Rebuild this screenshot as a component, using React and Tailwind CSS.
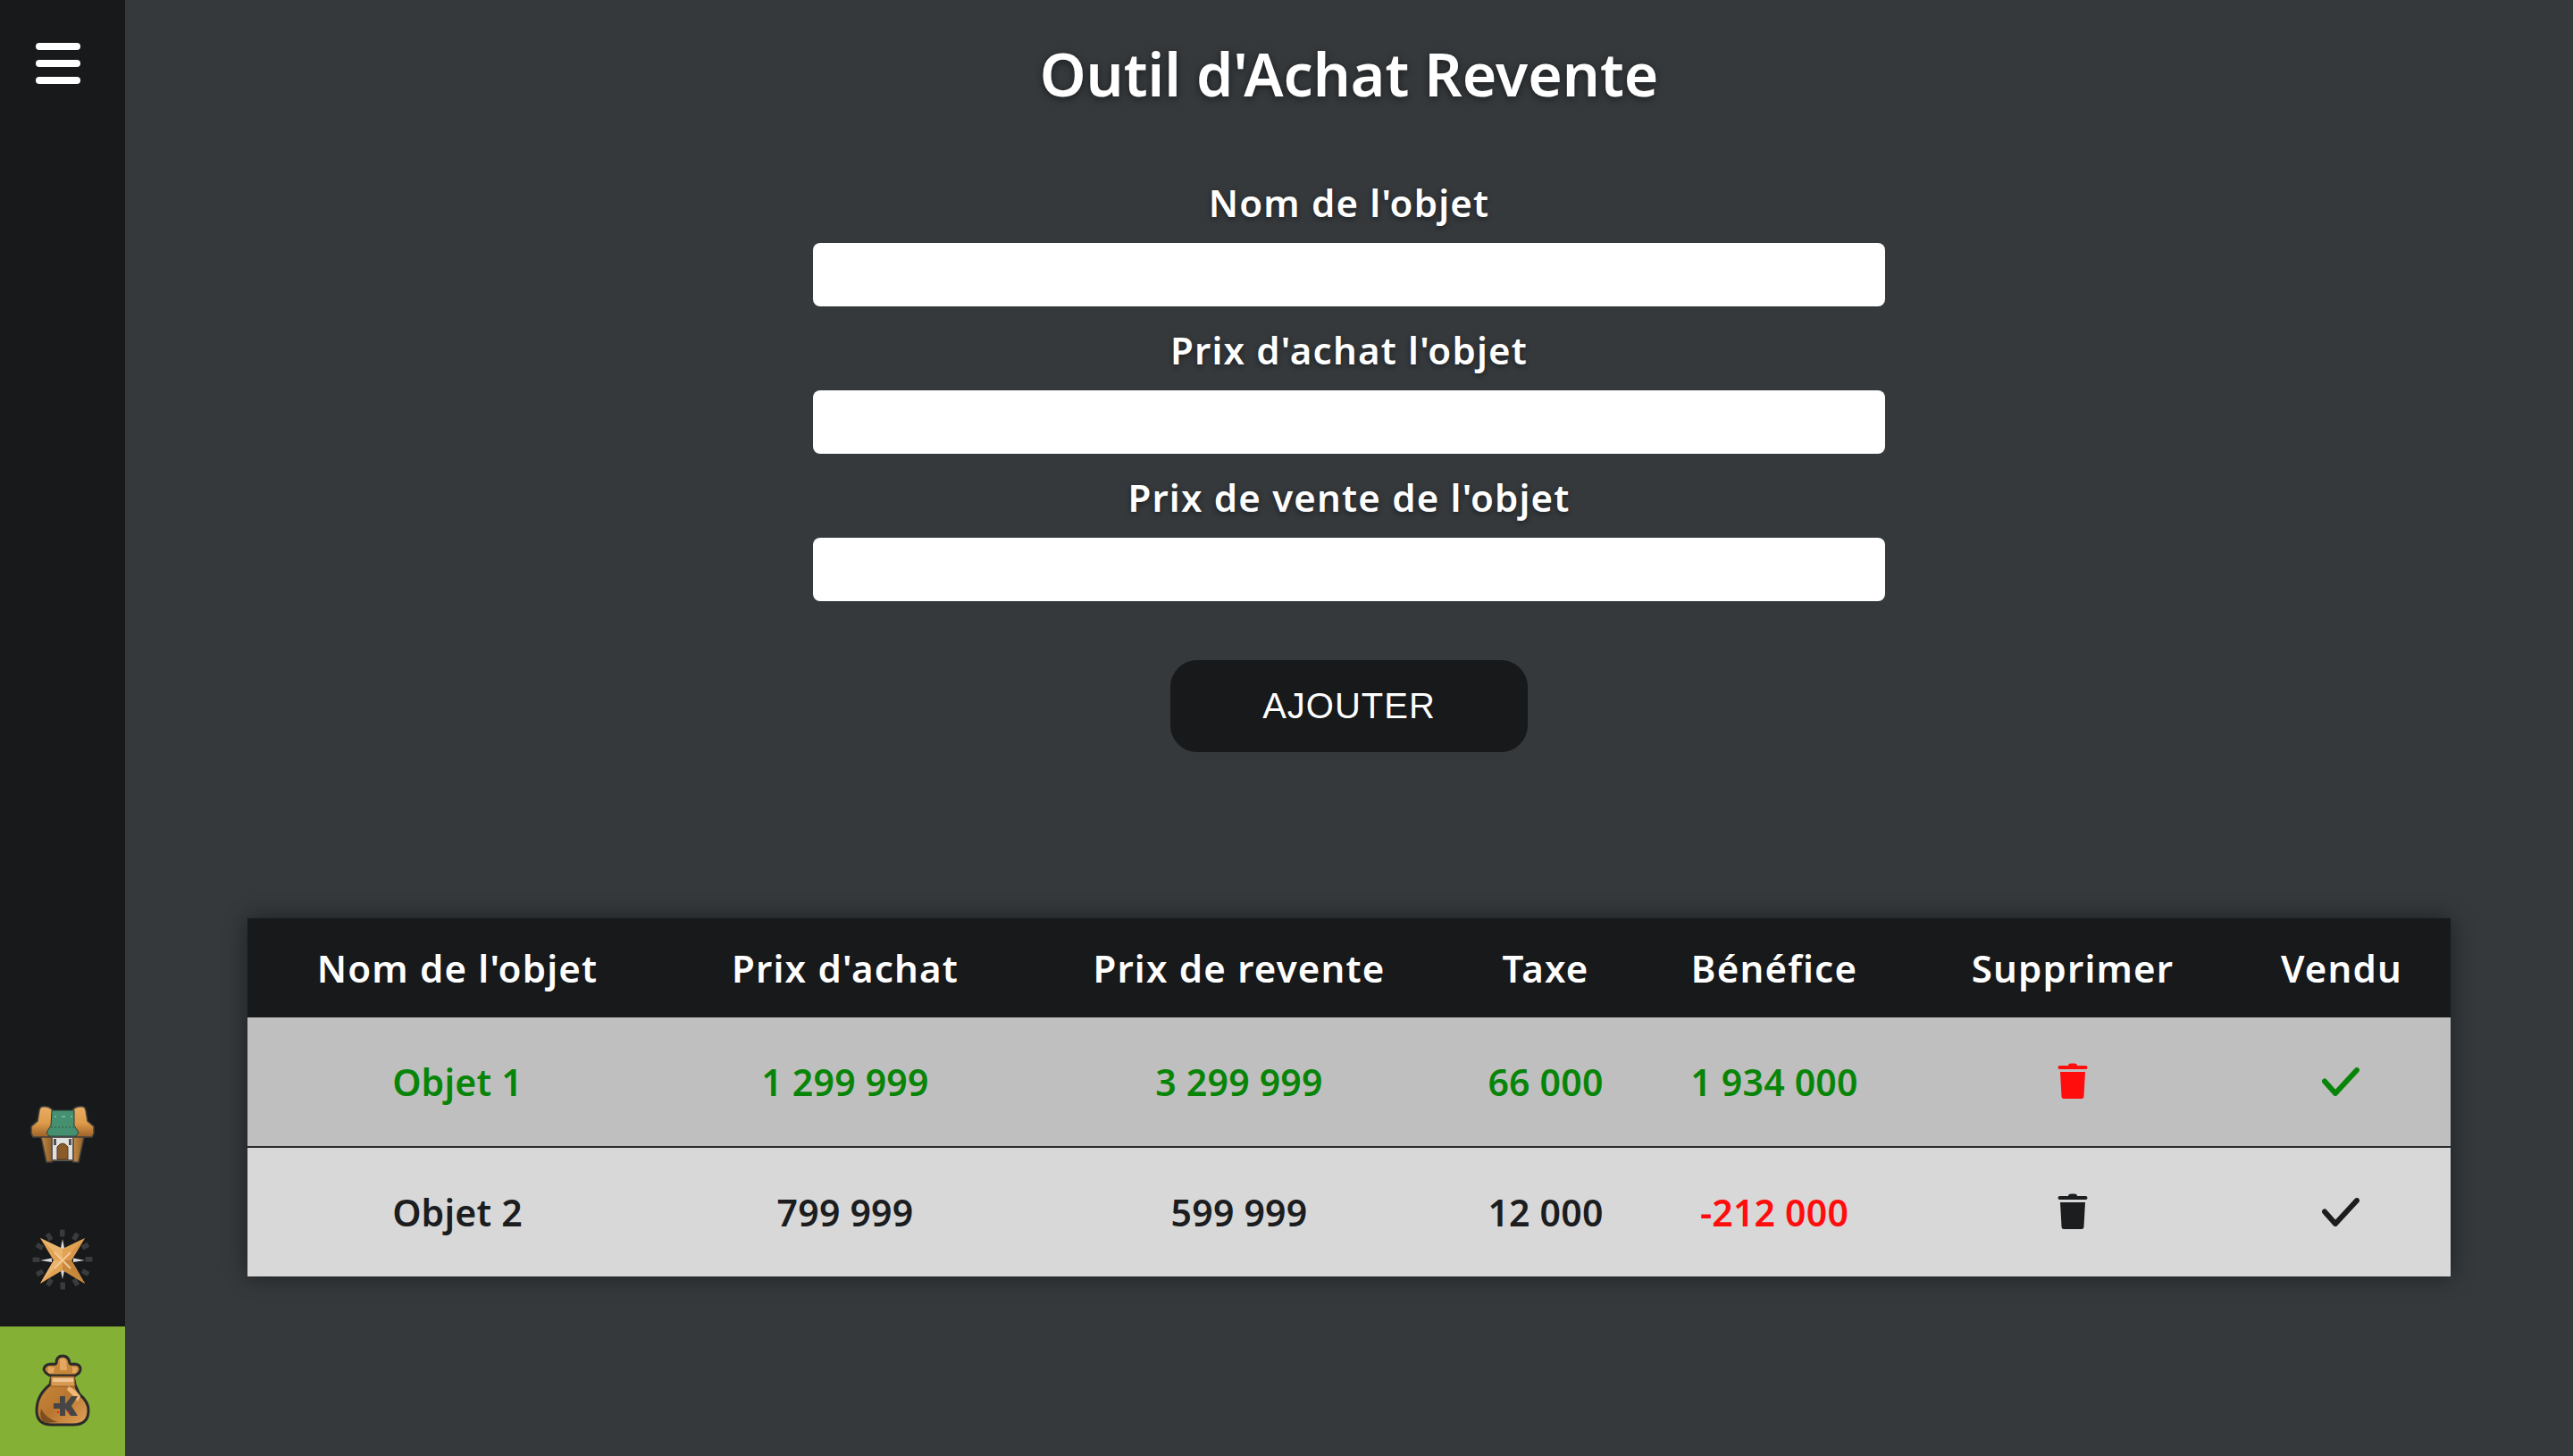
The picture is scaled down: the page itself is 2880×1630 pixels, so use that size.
const font = "font-['Noto_Sans',sans-serif]";

function Chest() {
  return (
    <svg width="90" height="80" viewBox="0 0 90 80">
      <defs>
        <linearGradient id="ch-o" x1="0" y1="0" x2="0" y2="1">
          <stop offset="0" stopColor="#e8ae64" />
          <stop offset="0.55" stopColor="#dd9a4a" />
          <stop offset="1" stopColor="#9a6126" />
        </linearGradient>
        <linearGradient id="ch-b" x1="0" y1="0" x2="1" y2="0">
          <stop offset="0" stopColor="#c58a42" />
          <stop offset="1" stopColor="#8f5e2a" />
        </linearGradient>
      </defs>
      <path d="M22 10 Q20 10 19 14 L17 26 L10 32 V40 L12 44 H32 L34 14 Q30 9 22 10 Z" fill="url(#ch-o)" stroke="#45423d" strokeWidth="1.5" />
      <path d="M68 10 Q70 10 71 14 L73 26 L80 32 V40 L78 44 H58 L56 14 Q60 9 68 10 Z" fill="url(#ch-o)" stroke="#45423d" strokeWidth="1.5" />
      <path d="M21 44 H33 V72 H27 Z" fill="url(#ch-b)" stroke="#45423d" strokeWidth="1.5" />
      <path d="M69 44 H57 V72 H63 Z" fill="url(#ch-b)" stroke="#45423d" strokeWidth="1.5" />
      <path d="M33 44 H57 V70 H33 Z" fill="#dfe0df" stroke="#5a5753" strokeWidth="2" />
      <path d="M39 69 V55 Q45 47 51 55 V69 Z" fill="#8a5a29" stroke="#4f3a22" strokeWidth="1" />
      <rect x="35" y="46" width="3" height="7" fill="#55524e" />
      <rect x="52" y="46" width="3" height="7" fill="#55524e" />
      <path d="M33 14 H58 V31 L63 39 L60 43 H30 L27 39 L32 31 Z" fill="#459070" stroke="#2d3b33" strokeWidth="1" />
      <path d="M36 21 h2 M44 21 h4 M54 21 h2" stroke="#a6d4bc" strokeWidth="1" />
      <path d="M32 33 H59" stroke="#2e5a45" strokeWidth="1" strokeDasharray="2 2" />
    </svg>
  );
}

function Star() {
  const ticks = [0, 30, 60, 90, 120, 150, 180, 210, 240, 270, 300, 330];
  return (
    <svg width="90" height="80" viewBox="0 0 90 80">
      {ticks.map((a) => (
        <rect key={a} x="42" y="6.5" width="5.5" height="8" rx="1" fill="#3a3b3c" transform={`rotate(${a} 45 40)`} />
      ))}
      <path d="M45 17 L48 32 H42 Z M45 62 L42 48 H48 Z M20 41 L33 38.5 V43 Z M70 41 L57 43 V38.5 Z" fill="#d8d8d8" />
      <path d="M20 16 L45 28 L70 16 L55 41 L70 67 L45 52 L20 67 L35 41 Z" fill="#e2a253" />
      <path d="M20 16 L45 28 L45 41 Z M20 67 L35 41 L45 41 Z" fill="#eab46d" />
      <path d="M70 67 L55 41 L45 41 Z M70 16 L45 41 L55 41 Z" fill="#d8964a" />
      <path d="M45 41 L55 41 L70 67 L45 52 Z" fill="#b8782f" opacity="0.6" />
      <path d="M36 32 L54 50 M54 32 L36 50" stroke="#f3c995" strokeWidth="2" />
    </svg>
  );
}

function Bag() {
  return (
    <svg width="90" height="95" viewBox="0 0 90 95">
      <defs>
        <linearGradient id="bg-o" x1="0" y1="0" x2="1" y2="1">
          <stop offset="0" stopColor="#cf8d41" />
          <stop offset="0.5" stopColor="#b8762f" />
          <stop offset="1" stopColor="#e3a45a" />
        </linearGradient>
      </defs>
      <path d="M33 31 L31 41 Q16 53 16 70 Q16 86 33 86 H57 Q74 86 74 70 Q74 60 64 52 L59 41 L57 31 Z" fill="url(#bg-o)" stroke="#2b2b2b" strokeWidth="3" />
      <path d="M31 31 Q25 28 24 24 Q25 18 33 18 Q37 19 38 17 Q38 9 45 9 Q52 9 53 17 Q54 19 58 18 Q65 18 65 24 Q65 28 59 31 Z" fill="#c6873b" stroke="#2b2b2b" strokeWidth="3" />
      <path d="M42 13 Q45 10 49 13 L50 25 H42 Z M29 21 L36 22 L35 28 H29 Z M56 21 L62 22 L60 28 H56 Z" fill="#e3a85f" />
      <path d="M32 32 H58 L59 43 H32 Z" fill="#d79a52" stroke="#8d5a22" strokeWidth="1" />
      <path d="M34 34 H57 V38 H34 Z" fill="#f0c595" />
      <path d="M52 43 Q60 47 65 54 L62 60 Q56 52 50 47 Z" fill="#efb877" />
      <path d="M42 54 H48 V63 L55 54 H62 L55 65 L62 76 H54 L48 68 V76 H42 V68 H35 V62 H42 Z" fill="#454545" />
      <path d="M21 68 Q26 79 40 83 L26 84 Q18 80 21 68 Z" fill="#7d4e1f" />
      <rect x="39" y="71" width="2" height="2" fill="#ff2020" />
      <rect x="51" y="71" width="1.5" height="1.5" fill="#ff2020" />
    </svg>
  );
}

function Trash({ color }) {
  return (
    <svg width="34" height="40" viewBox="0 0 34 40">
      <path d="M12 3 Q12 0.5 15 0.5 H19 Q22 0.5 22 3 H31.5 Q33.5 3 33.5 5 Q33.5 7 31.5 7 H2.5 Q0.5 7 0.5 5 Q0.5 3 2.5 3 Z" fill={color} />
      <path d="M3 10 H31 L29.5 37 Q29.5 40 27 40 H7 Q4.5 40 4.5 37 Z" fill={color} />
    </svg>
  );
}

function Check({ color }) {
  return (
    <svg width="42" height="32" viewBox="0 0 42 32">
      <path d="M3 15.5 L15 29 L39 3" fill="none" stroke={color} strokeWidth="6" strokeLinecap="round" strokeLinejoin="round" />
    </svg>
  );
}

const headers = ["Nom de l'objet", "Prix d'achat", "Prix de revente", "Taxe", "Bénéfice", "Supprimer", "Vendu"];
const widths = ["w-[470px]", "w-[398px]", "w-[484px]", "w-[202px]", "w-[310px]", "w-[358px]", "w-[244px]"];

function Field({ label }) {
  return (
    <div className="flex flex-col items-center w-[1200px]">
      <label className="h-[94px] pt-[2px] flex items-center text-white text-[42px] font-semibold tracking-[1.2px] [text-shadow:0_2px_6px_rgba(0,0,0,0.45)]">
        {label}
      </label>
      <input className="w-full h-[71px] bg-white rounded-[8px] outline-none" />
    </div>
  );
}

function Row({ name, achat, vente, taxe, benef, rowClass, textClass, benefClass, icon }) {
  const cell = "text-center align-middle p-0";
  const text = `${cell} pt-[2px]`;
  return (
    <tr className={`h-[145px] ${rowClass} ${textClass} text-[41px] font-semibold tracking-[0.2px]`}>
      <td className={text}>{name}</td>
      <td className={text}>{achat}</td>
      <td className={text}>{vente}</td>
      <td className={text}>{taxe}</td>
      <td className={`${text} ${benefClass}`}>{benef}</td>
      <td className={cell}>
        <div className="flex justify-center pb-[2px]"><Trash color={icon.trash} /></div>
      </td>
      <td className={cell}>
        <div className="flex justify-center pr-[3px]"><Check color={icon.check} /></div>
      </td>
    </tr>
  );
}

export default function App() {
  return (
    <div className={`flex h-screen w-full overflow-hidden bg-[#35393c] ${font}`}>
      <aside className="w-[140px] shrink-0 h-full bg-[#17191b] flex flex-col">
        <button className="pl-[40px] pt-[48px] flex flex-col gap-[11px]">
          <span className="block w-[50px] h-[8px] rounded-full bg-white" />
          <span className="block w-[50px] h-[8px] rounded-full bg-white" />
          <span className="block w-[50px] h-[8px] rounded-full bg-white" />
        </button>
        <div className="flex-1" />
        <div className="h-[145px] pt-[2px] flex items-center justify-center"><Chest /></div>
        <div className="h-[145px] pb-[5px] flex items-center justify-center"><Star /></div>
        <div className="h-[145px] pb-[3px] bg-[#84b135] flex items-center justify-center"><Bag /></div>
      </aside>
      <main className="flex-1 flex flex-col items-center">
        <h1 className="h-[178px] pb-[14px] flex items-center text-white text-[66px] font-semibold tracking-normal [text-shadow:0_2px_8px_rgba(0,0,0,0.5)]">
          Outil d'Achat Revente
        </h1>
        <Field label="Nom de l'objet" />
        <Field label="Prix d'achat l'objet" />
        <Field label="Prix de vente de l'objet" />
        <button className="mt-[66px] pb-[2px] w-[400px] h-[103px] rounded-[30px] bg-[#17191b] text-white text-[40px] font-['Liberation_Sans',sans-serif] tracking-[1px]">
          AJOUTER
        </button>
        <table className="mt-[186px] w-[2466px] table-fixed border-collapse shadow-[0_0_24px_rgba(0,0,0,0.45)]">
          <colgroup>
            {widths.map((w) => <col key={w} className={w} />)}
          </colgroup>
          <thead>
            <tr className="h-[111px] bg-[#17191b] text-white text-[42px] tracking-[1.2px]">
              {headers.map((h) => (
                <th key={h} className="text-center align-middle p-0 font-semibold">{h}</th>
              ))}
            </tr>
          </thead>
          <tbody>
            <Row name="Objet 1" achat="1 299 999" vente="3 299 999" taxe="66 000" benef="1 934 000"
              rowClass="bg-[#bfbfbf] border-b-2 border-[#2a2b2d]" textClass="text-[#088508]" benefClass=""
              icon={{ trash: "#ff0d0d", check: "#088508" }} />
            <Row name="Objet 2" achat="799 999" vente="599 999" taxe="12 000" benef="-212 000"
              rowClass="bg-[#d8d8d8]" textClass="text-[#1c1d1f]" benefClass="text-[#ff0d0d]"
              icon={{ trash: "#1c1d1f", check: "#1c1d1f" }} />
          </tbody>
        </table>
      </main>
    </div>
  );
}
